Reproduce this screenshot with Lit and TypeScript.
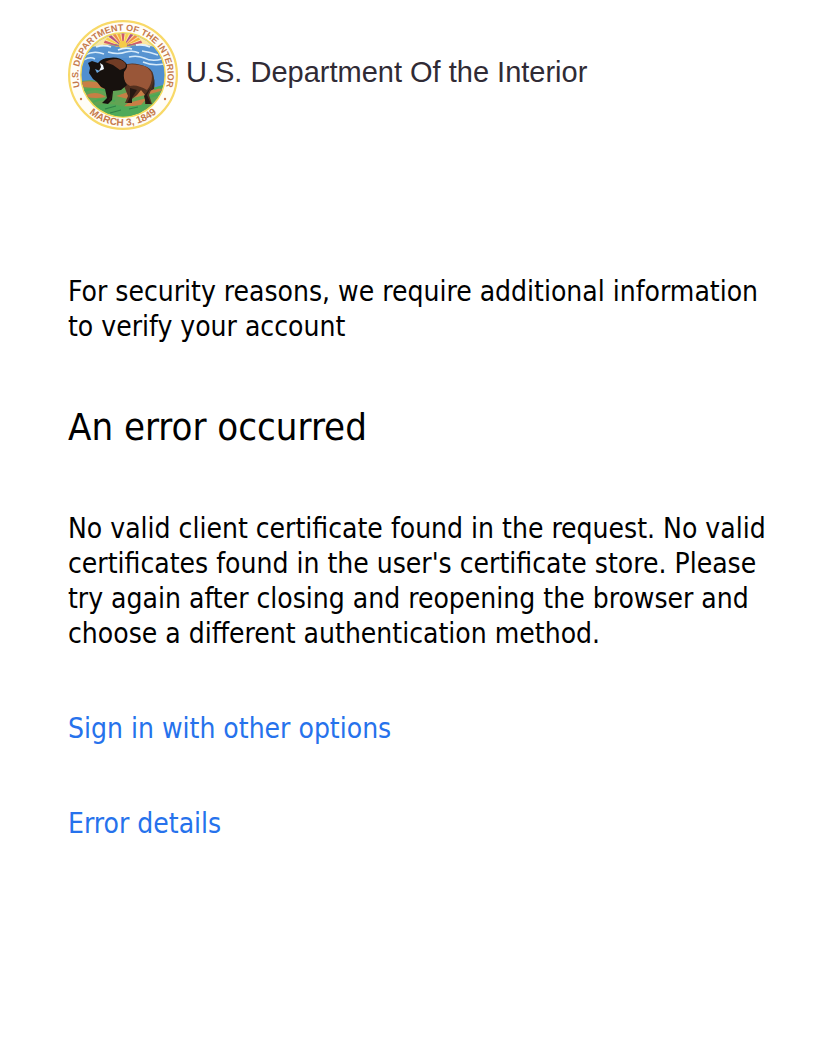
import { LitElement, html, css, svg } from "lit";
import { customElement } from "lit/decorators.js";

@customElement("interior-seal")
class InteriorSeal extends LitElement {
  static styles = css`
    :host {
      display: block;
      flex: none;
      width: 110px;
      height: 110px;
    }
    .seal {
      display: block;
      width: 100%;
      height: 100%;
    }
    .legend {
      font-family: "Liberation Sans", Arial, sans-serif;
      font-size: 9px;
      font-weight: 700;
      fill: #c67a4b;
    }
    .date {
      font-size: 10px;
    }
  `;

  private rays() {
    const colors = ["#f3b53c", "#cf5b6b", "#f7d24a", "#b14f86", "#f08a4b"];
    return Array.from({ length: 13 }, (_, i) => {
      const a = Math.PI + ((i + 0.5) * Math.PI) / 13;
      const d = 0.085;
      const r = 20;
      const point = (t: number) => `${55 + r * Math.cos(t)},${27 + 0.75 * r * Math.sin(t)}`;
      return svg`<polygon points="55,27 ${point(a - d)} ${point(a + d)}" fill=${colors[i % 5]}></polygon>`;
    });
  }

  render() {
    return html`
      <svg class="seal" viewBox="0 0 110 110" role="img" aria-label="Seal of the U.S. Department of the Interior">
        <defs>
          <clipPath id="scene"><circle cx="55" cy="55" r="41.5"></circle></clipPath>
          <path id="upper" d="M12.2 67.8 A44.6 44.6 0 1 1 97.8 67.8"></path>
          <path id="lower" d="M11.5 81.5 A51 51 0 0 0 98.5 81.5"></path>
        </defs>
        <circle cx="55" cy="55" r="53.9" fill="#fffdf7" stroke="#f8d968" stroke-width="2.2"></circle>
        <circle cx="55" cy="55" r="42" fill="#4f8fd0" stroke="#f5dc5c" stroke-width="2"></circle>
        <g clip-path="url(#scene)">
          <rect x="12" y="12" width="86" height="64" fill="#508fd0"></rect>
          <path d="M22 27 Q30 12 55 12 T88 27 L78 26 Q55 21 32 26Z" fill="#fbe7a0"></path>
          ${this.rays()}
          <circle cx="55" cy="25" r="4" fill="#f5cb49"></circle>
          <path d="M22 29 Q34 23 46 26 Q54 30 64 26 Q76 22 88 28 L93 38 H17Z" fill="#5794d1"></path>
          <path d="M28 27 Q36 24 43 27 M50 30 Q57 27 64 29 M68 25 Q76 24 82 27" fill="none" stroke="#e3f2fb" stroke-width="1.8"></path>
          <path d="M17 35 Q26 30 36 34 M40 32 Q50 35 58 32 Q65 30 71 33 M74 31 Q82 32 90 35 M16 40 Q22 36 27 39 M61 37 Q69 35 76 38 Q84 42 94 39 M75 42 Q84 46 96 44" fill="none" stroke="#d6eaf9" stroke-width="1.5"></path>
          <path d="M13 61 L24 60 Q35 62 43 66 L78 68 L98 66 V98 H12Z" fill="#62a353"></path>
          <path d="M13 62 Q25 60 35 64 L39 69 L14 67Z M18 75 Q29 70 38 77 Q28 79 18 77Z M48 76 L63 71 L82 66 L96 70 L82 74 L60 79Z M60 83 L79 78 L73 85 L54 88Z" fill="#c87e45"></path>
          <path d="M16 71 Q27 67 39 71 M25 82 Q34 77 47 81 M86 69 L95 66 M78 78 L92 74" fill="none" stroke="#49aa55" stroke-width="2"></path>
          <path d="M26 86 Q38 82 54 86 Q69 87 81 83 L70 97 H35Z" fill="#4faa59"></path>
          <path d="M37 89 L48 86 M42 93 L53 90 M61 89 L70 87" stroke="#2f8247" stroke-width="1.2"></path>
          <path d="M83 53 Q88 58 86 69 L82 71 L82 60Z" fill="#352925"></path>
          <path d="M55 45 Q66 41 79 47 Q86 50 86 60 L83 70 L81 75 L84 84 L77 84 L77 75 L73 70 L69 75 L64 79 L63 83 L57 83 L60 76 L56 66Z" fill="#53301f"></path>
          <path d="M55 46 Q61 43 71 45 Q83 46 84 56 Q84 64 79 70 Q69 64 62 66 Q56 63 55 56Z" fill="#995638"></path>
          <path d="M20 43 L24 41 L30 43 Q34 38 41 38 Q51 36 58 43 Q61 46 56 52 Q55 60 59 65 L53 70 L45 71 L44 80 L40 84 L34 83 L39 78 L37 69 L33 67 L29 62 L25 59 L21 53 L22 48Z" fill="#17110e"></path>
          <path d="M37 42 Q45 37 53 40 Q60 43 57 48 L52 50 L45 45Z" fill="#713c25"></path>
          <path d="M62 68 L69 70 L64 78 L64 83 L59 83 L62 77Z M83 67 L79 75 L83 84 L78 84 L76 76Z M45 68 L43 80 L38 82 L42 77Z" fill="#251813"></path>
          <path d="M32 43 L35 45 L36 49 L34 50 L31 51 L33 47Z" fill="#eef7ff"></path>
          <path d="M27 49 L32 51 L29 53Z" fill="#6ba7df"></path>
        </g>
        <text class="legend"><textPath href="#upper" startOffset="50%" text-anchor="middle">U.S. DEPARTMENT OF THE INTERIOR</textPath></text>
        <text class="legend date"><textPath href="#lower" startOffset="50%" text-anchor="middle">MARCH 3, 1849</textPath></text>
        <circle cx="13" cy="79" r="1.2" fill="#c67a4b"></circle>
        <circle cx="97" cy="79" r="1.2" fill="#c67a4b"></circle>
      </svg>
    `;
  }
}

@customElement("app-root")
class AppRoot extends LitElement {
  static styles = css`
    :host {
      display: block;
      box-sizing: border-box;
      min-height: 100vh;
      padding: 20px 64px 64px 68px;
      background: #fff;
      color: #000;
      font-family: Tahoma, "DejaVu Sans Condensed", "Noto Sans", sans-serif;
      font-size: 28px;
      line-height: 35px;
    }
    .brand {
      display: flex;
      align-items: center;
      gap: 8px;
      margin-bottom: 144px;
    }
    .name {
      padding-bottom: 6px;
      color: #302b35;
      font-family: "Liberation Sans", Arial, sans-serif;
      font-size: 29px;
    }
    .content {
      display: flex;
      flex-direction: column;
      align-items: flex-start;
      gap: 60px;
    }
    .title,
    .text {
      margin: 0;
      font-weight: 400;
    }
    .title {
      font-size: 38px;
      line-height: 47px;
    }
    .link {
      color: #2672ec;
      text-decoration: none;
    }
  `;

  render() {
    return html`
      <header class="brand">
        <interior-seal></interior-seal>
        <span class="name">U.S. Department Of the Interior</span>
      </header>
      <main class="content">
        <p class="text">For security reasons, we require additional information to verify your account</p>
        <h1 class="title">An error occurred</h1>
        <p class="text">
          No valid client certificate found in the request. No valid certificates found in the user's
          certificate store. Please try again after closing and reopening the browser and choose a
          different authentication method.
        </p>
        <a class="link" href="#options">Sign in with other options</a>
        <a class="link" href="#details">Error details</a>
      </main>
    `;
  }
}
